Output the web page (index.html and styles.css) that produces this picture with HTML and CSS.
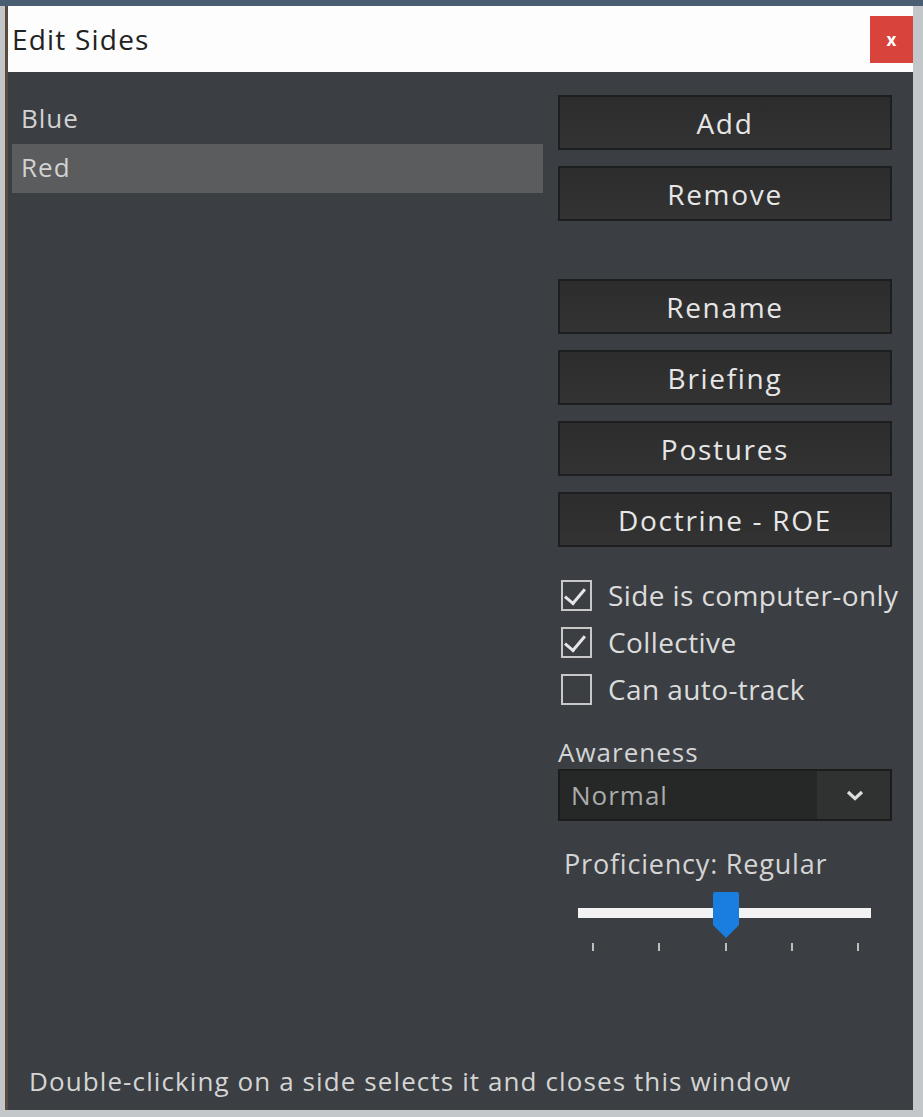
FILE: index.html
```html
<!DOCTYPE html>
<html lang="en">
<head>
    <meta charset="UTF-8">
    <title>Edit Sides</title>
    <link rel="stylesheet" href="styles.css">
</head>
<body>
    <div class="window">
        <div class="title-bar">
            <span class="title">Edit Sides</span>
            <button class="close-btn">x</button>
        </div>
        <div class="content">
            <div class="main">
                <ul class="side-list">
                    <li>Blue</li>
                    <li class="selected">Red</li>
                </ul>
                <div class="controls">
                    <button class="btn">Add</button>
                    <button class="btn">Remove</button>
                    <button class="btn spaced">Rename</button>
                    <button class="btn">Briefing</button>
                    <button class="btn">Postures</button>
                    <button class="btn">Doctrine - ROE</button>

                    <div class="checks">
                        <label class="check"><span class="box checked"></span>Side is computer-only</label>
                        <label class="check"><span class="box checked"></span>Collective</label>
                        <label class="check"><span class="box"></span>Can auto-track</label>
                    </div>

                    <div class="field-label">Awareness</div>
                    <div class="select">
                        <span>Normal</span>
                        <svg class="chevron" width="18" height="11" viewBox="0 0 18 11">
                            <path d="M2 2 L9 8.5 L16 2" fill="none" stroke="#dcdcdc" stroke-width="3.2"/>
                        </svg>
                    </div>

                    <div class="field-label prof">Proficiency: Regular</div>
                    <div class="slider">
                        <div class="track"></div>
                        <svg class="thumb" width="30" height="48" viewBox="0 0 30 48">
                            <path d="M2 3 Q2 1 4 1 L26 1 Q28 1 28 3 L28 34 L15 47 L2 34 Z" fill="#1a7ee0"/>
                        </svg>
                        <div class="ticks">
                            <span></span><span></span><span></span><span></span><span></span>
                        </div>
                    </div>
                </div>
            </div>
            <div class="hint">Double-clicking on a side selects it and closes this window</div>
        </div>
    </div>
</body>
</html>
```

FILE: styles.css
```css
* {
    margin: 0;
    padding: 0;
    box-sizing: border-box;
}

body {
    width: 923px;
    height: 1117px;
    background: #c3c7ca;
    border-top: 6px solid #495e72;
    padding: 0 10px 7px 5px;
    font-family: 'Open Sans', 'Noto Sans', sans-serif;
    overflow: hidden;
}

.window {
    height: 100%;
    display: flex;
    flex-direction: column;
    border-left: 3px solid #5a4b3e;
}

.title-bar {
    height: 66px;
    background: #fdfdfd;
    display: flex;
    align-items: center;
    justify-content: space-between;
    padding: 0 0 0 4px;
}

.title {
    font-size: 28px;
    color: #222;
    letter-spacing: 1.2px;
}

.close-btn {
    width: 43px;
    height: 47px;
    background: #d8443c;
    border: none;
    color: #fff;
    font-family: inherit;
    font-size: 17px;
    font-weight: 700;
}

.content {
    flex: 1;
    background: #3b3f43;
    display: flex;
    flex-direction: column;
    justify-content: space-between;
    padding: 23px 21px 0 4px;
    color: #d6d6d6;
}

.main {
    display: flex;
    gap: 15px;
}

.side-list {
    list-style: none;
    width: 531px;
    font-size: 26px;
    letter-spacing: 1px;
    color: #d2d2d2;
}

.side-list li {
    height: 49px;
    line-height: 46px;
    padding-left: 9px;
}

.side-list li.selected {
    background: #5b5c5d;
}

.controls {
    width: 334px;
    display: flex;
    flex-direction: column;
}

.btn {
    height: 55px;
    margin-bottom: 16px;
    background: linear-gradient(#2c2c2d, #333334);
    border: 2px solid #1d1e1f;
    color: #e6e6e6;
    font-family: inherit;
    font-size: 28px;
    letter-spacing: 1.7px;
}

.btn.spaced {
    margin-top: 42px;
}

.checks {
    margin-top: 14px;
    display: flex;
    flex-direction: column;
    gap: 11px;
}

.check {
    display: flex;
    align-items: center;
    height: 36px;
    font-size: 28px;
    letter-spacing: 0.4px;
    color: #dcdcdc;
    padding-left: 3px;
    white-space: nowrap;
}

.box {
    width: 31px;
    height: 31px;
    border: 2px solid #c8c8c8;
    margin-right: 16px;
    position: relative;
    flex-shrink: 0;
}

.box.checked::after {
    content: "";
    position: absolute;
    left: 6px;
    top: 2px;
    width: 9px;
    height: 17px;
    border: solid #e6e6e6;
    border-width: 0 3px 3px 0;
    transform: rotate(40deg);
}

.field-label {
    margin-top: 28px;
    font-size: 26px;
    letter-spacing: 1px;
    color: #d4d4d4;
    line-height: 34px;
}

.select {
    height: 52px;
    display: flex;
    align-items: center;
    justify-content: space-between;
    background: linear-gradient(90deg, #262727 78%, #303131 78%);
    border: 2px solid #1b1c1c;
    padding: 0 26px 0 11px;
    font-size: 26px;
    letter-spacing: 1px;
    color: #ababab;
}

.field-label.prof {
    margin-top: 26px;
    padding-left: 6px;
    font-size: 27px;
    letter-spacing: 0.8px;
}

.slider {
    position: relative;
    height: 70px;
    margin: 10px 21px 0 20px;
}

.track {
    position: absolute;
    left: 0;
    right: 0;
    top: 17px;
    height: 10px;
    background: #f2f2f2;
}

.thumb {
    position: absolute;
    left: 133px;
    top: 0;
}

.ticks {
    position: absolute;
    left: 14px;
    right: 12px;
    top: 52px;
    display: flex;
    justify-content: space-between;
}

.ticks span {
    width: 2px;
    height: 8px;
    background: #bdbdbd;
}

.hint {
    padding: 0 0 11px 17px;
    font-size: 26px;
    letter-spacing: 1.1px;
    color: #d4d4d4;
}
```
